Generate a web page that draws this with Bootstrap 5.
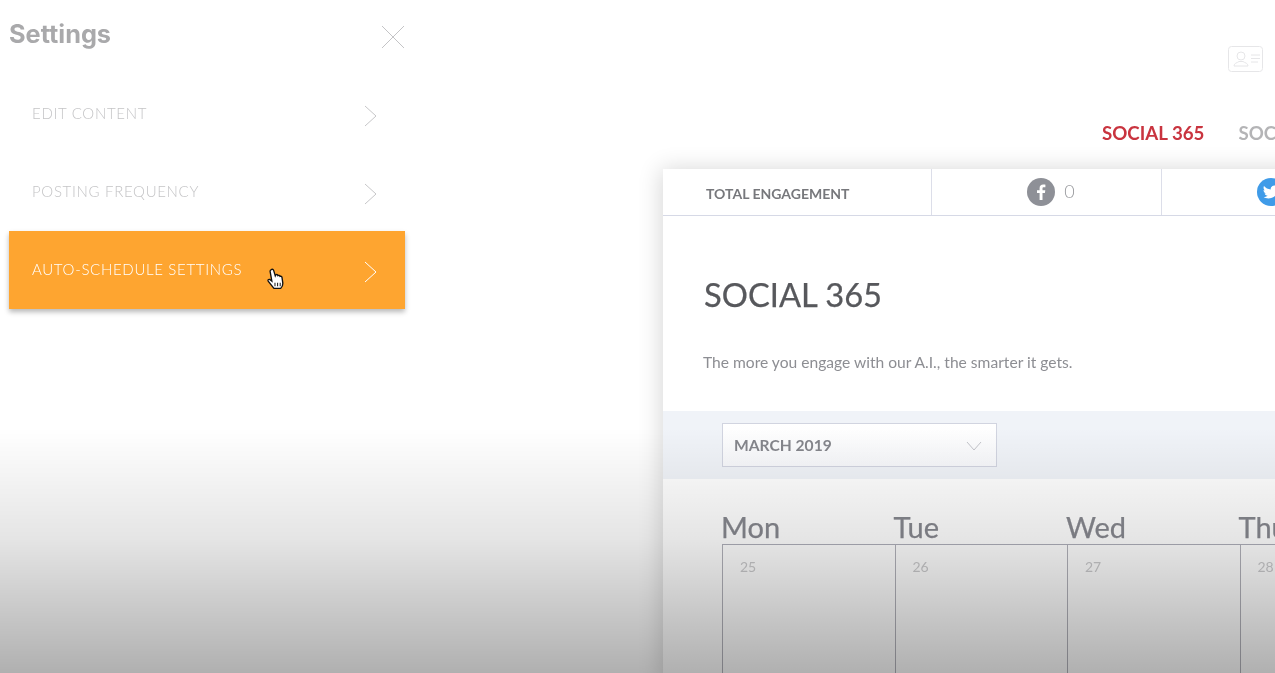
<!DOCTYPE html>
<html lang="en">
<head>
<meta charset="utf-8">
<title>Settings</title>
<link rel="stylesheet" href="https://cdn.jsdelivr.net/npm/bootstrap@5.3.0/dist/css/bootstrap.min.css">
<style>
html,body{height:100%;overflow:hidden;background:#fff}
body{font-family:"Lato","Liberation Sans",sans-serif}
.stage{height:673px;width:1275px;overflow:hidden;position:relative;filter:blur(.4px)}
.side-pane{width:405px;flex:none;padding-left:9px}
.side-head{height:75px;padding-top:17px}
.side-title{font-family:"Inter","Liberation Sans",sans-serif;font-weight:700;font-size:25.300px;line-height:33px;color:#a9a9ab;margin:0}
.close-x{width:24px;height:24px;margin-top:8px;display:block}
.side-item{height:78px;padding:0 28px 1px 23px;font-size:15px;font-weight:300;letter-spacing:.68px;color:#c4c4c6}
.side-item.on{background:#fea530;color:#fff;box-shadow:0 3px 5px rgba(0,0,0,.28)}
.chev{width:13px;height:24px;margin-top:5px}
.hand{width:19px;height:23px;margin-left:24px;margin-top:20px}
.main-pane{width:870px;flex:none;padding-left:258px}
.top-tool{height:169px}
.id-ico{width:35px;height:26px;margin:46px 12px 0 0;display:block}
.tab-row{gap:34px;font-size:18.700px;font-weight:700;line-height:24px;white-space:nowrap;margin-top:49px;padding-left:439px}
.tab-on{color:#c9343f}
.tab-off{color:#b4b4b6}
.sheet{width:900px;border:0;border-radius:0;box-shadow:-2px 0 22px rgba(0,0,0,.16)}
.stat-row{height:47px;border-bottom:1px solid #d6d9e6}
.stat-a{width:269px;padding-left:43px;font-size:14px;font-weight:700;color:#77787c;border-right:1px solid #dcdee9;padding-top:3px}
.stat-b{width:230px;border-right:1px solid #dcdee9;color:#97989c;font-size:18px;font-weight:300;gap:9px;padding:0 0 1px 9px}
.stat-c{width:200px;padding-left:95px}
.soc-ico{width:28px;height:28px;display:block;flex:none}
.sheet-title{font-size:32.700px;font-weight:400;line-height:40px;color:#57585c;-webkit-text-stroke:.25px #57585c;margin:59px 0 0 41px}
.sheet-sub{font-size:15.600px;line-height:20px;color:#8d8e93;margin:37px 0 39px 40px}
.band{height:68px;background:#f0f3f8;padding:12px 0 0 59px}
.pick{width:275px;height:44px;background:linear-gradient(#fff,#f7f8fb);border:1px solid #d1d4e0;padding:1px 14px 0 11px;font-size:15.600px;font-weight:700;color:#85868c}
.pick svg{width:16px;height:10px}
.cal{padding:30px 0 0 59px;width:900px}
.cal-head,.cal-body{display:grid;grid-template-columns:repeat(4,172.5px)}
.cal-head{margin-left:-1px}
.cal-day{font-size:29px;line-height:35px;color:#87888f;-webkit-text-stroke:.25px #87888f;height:35px}
.cal-body{border-top:1px solid #aeafba;height:140px}
.cal-cell{border-left:1px solid #b2b2ba;padding:13px 0 0 17px;font-size:14px;line-height:18px;color:#cbcbcd}
.fade-veil{position:absolute;left:0;right:0;top:428px;bottom:0;background:linear-gradient(rgba(0,0,0,0),rgba(0,0,0,.1) 45%,rgba(0,0,0,.31));pointer-events:none}
</style>
</head>
<body>
<div class="stage d-flex">
  <aside class="side-pane">
    <div class="side-head d-flex justify-content-between align-items-start">
      <h1 class="side-title">Settings</h1>
      <svg class="close-x" viewBox="0 0 24 24" fill="none" stroke="#c4c4c6" stroke-width="1"><path d="M1 1 23 23M23 1 1 23"/></svg>
    </div>
    <div class="side-item d-flex align-items-center justify-content-between">
      <span>EDIT CONTENT</span>
      <svg class="chev" viewBox="0 0 13 24" fill="none" stroke="#c6c6c8" stroke-width="1"><path d="M1 2 12 12 1 22"/></svg>
    </div>
    <div class="side-item d-flex align-items-center justify-content-between">
      <span>POSTING FREQUENCY</span>
      <svg class="chev" viewBox="0 0 13 24" fill="none" stroke="#c6c6c8" stroke-width="1"><path d="M1 2 12 12 1 22"/></svg>
    </div>
    <div class="side-item on d-flex align-items-center">
      <span>AUTO-SCHEDULE SETTINGS</span>
      <svg class="hand" viewBox="0 0 18 22"><path d="M5 1.500c1-.8 2 0 2.300 1l1.500 5 .5-1c1-.6 1.800 0 2 .8.8-.6 1.800-.2 2 .7.800-.4 1.700 0 1.900 1l.8 5.500c.1 2-.6 3.500-2 5H7.500L2 12.500c-.6-1 .3-2 1.500-1.500l2 1.500L3.800 3c0-.6.5-1.200 1.200-1.500z" fill="#fff" stroke="#111" stroke-width="1.300"/><path d="M8.500 14v3.500M11 14v3.500M13.500 14v3.500" stroke="#222" stroke-width="1"/></svg>
      <svg class="chev ms-auto" viewBox="0 0 13 24" fill="none" stroke="#fff" stroke-width="1"><path d="M1 2 12 12 1 22"/></svg>
    </div>
  </aside>
  <main class="main-pane">
    <div class="top-tool">
      <div class="d-flex justify-content-end">
        <svg class="id-ico" viewBox="0 0 35 26" fill="none" stroke="#e6e6e8" stroke-width="1"><rect x=".5" y=".5" width="34" height="25" rx="3"/><circle cx="13" cy="10" r="4"/><path d="M6 20c0-3 3-3 5-4.500h4c2 1.500 5 1.500 5 4.500zM23 9h9M23 12.500h9M23 16h7"/></svg>
      </div>
      <div class="tab-row d-flex">
        <span class="tab-on">SOCIAL 365</span><span class="tab-off">SOCIAL 365</span>
      </div>
    </div>
    <section class="card sheet">
      <div class="stat-row d-flex">
        <div class="stat-a d-flex align-items-center">TOTAL ENGAGEMENT</div>
        <div class="stat-b d-flex align-items-center justify-content-center">
          <svg class="soc-ico" viewBox="0 0 28 28"><circle cx="14" cy="14" r="14" fill="#8e9097"/><path d="M15.500 22v-7h2.400l.4-2.800h-2.800v-1.700c0-.8.3-1.300 1.400-1.300h1.500V6.700c-.3 0-1.200-.1-2.200-.1-2.200 0-3.600 1.300-3.600 3.700v1.900H10V15h2.600v7z" fill="#fff"/></svg>
          <span>0</span>
        </div>
        <div class="stat-c d-flex align-items-center">
          <svg class="soc-ico" viewBox="0 0 28 28"><circle cx="14" cy="14" r="14" fill="#3f9be8"/><path d="M22 9c-.6.300-1.200.4-1.900.5.700-.4 1.200-1 1.400-1.800-.6.400-1.300.6-2.100.8a3.300 3.300 0 0 0-5.600 3C11 11.400 8.600 10.100 7 8.100c-.9 1.500-.4 3.400 1 4.400-.5 0-1-.2-1.500-.4 0 1.600 1.100 3 2.600 3.300-.5.100-1 .1-1.500 0 .4 1.300 1.600 2.200 3.100 2.300A6.600 6.600 0 0 1 6 19.100c6.600 3.300 15 .2 14.600-8.500.6-.4 1-.9 1.400-1.600z" fill="#fff"/></svg>
        </div>
      </div>
      <h2 class="sheet-title">SOCIAL 365</h2>
      <p class="sheet-sub">The more you engage with our A.I., the smarter it gets.</p>
      <div class="band">
        <div class="pick d-flex align-items-center justify-content-between">
          <span>MARCH 2019</span>
          <svg viewBox="0 0 16 10" fill="none" stroke="#c4c5cb" stroke-width="1"><path d="M1 1 8 9 15 1"/></svg>
        </div>
      </div>
      <div class="cal">
        <div class="cal-head"><div class="cal-day">Mon</div><div class="cal-day">Tue</div><div class="cal-day">Wed</div><div class="cal-day">Thu</div></div>
        <div class="cal-body"><div class="cal-cell">25</div><div class="cal-cell">26</div><div class="cal-cell">27</div><div class="cal-cell">28</div></div>
      </div>
    </section>
  </main>
  <div class="fade-veil"></div>
</div>
<script src="https://cdn.jsdelivr.net/npm/bootstrap@5.3.0/dist/js/bootstrap.bundle.min.js"></script>
</body>
</html>
